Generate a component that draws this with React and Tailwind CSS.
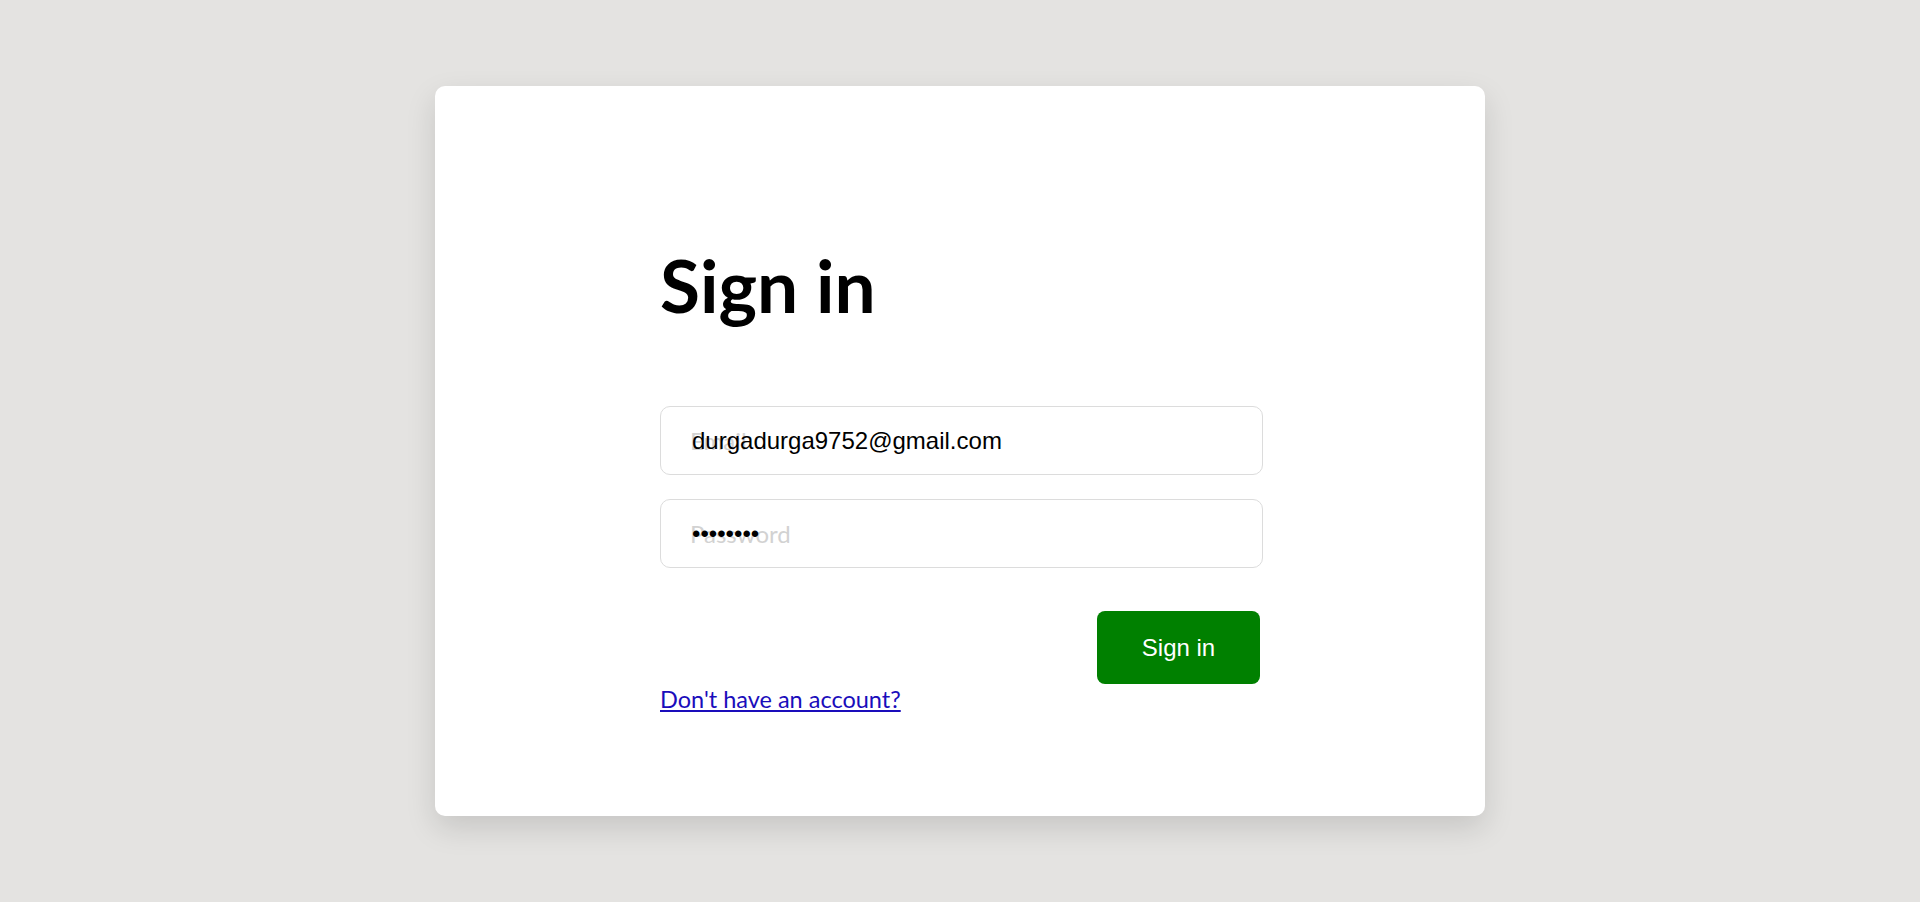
import { useState } from "react";

function Field({ type, value, placeholder, onChange }) {
  return (
    <div className="relative w-[603px] h-[69px] rounded-[10px] border border-[#dcdcdc] bg-white">
      <span className="absolute inset-y-0 left-[29px] flex items-center text-[24px] text-[#d2d2d2] font-['Lato',sans-serif] pointer-events-none">
        {placeholder}
      </span>
      <input
        type={type}
        value={value}
        onChange={(e) => onChange(e.target.value)}
        className="relative w-full h-full bg-transparent pl-[31px] pr-4 text-[24px] text-black font-['Liberation_Sans',Arial,sans-serif] outline-none rounded-[10px]"
      />
    </div>
  );
}

export default function App() {
  const [email, setEmail] = useState("durgadurga9752@gmail.com");
  const [password, setPassword] = useState("12345678");

  return (
    <div className="min-h-screen w-full bg-[#e4e3e1] flex items-center justify-center">
      <div className="w-[1050px] h-[730px] bg-white rounded-[10px] shadow-[0_12px_30px_rgba(0,0,0,0.13)] pt-[163px] flex flex-col items-center">
        <div className="w-[600px] flex flex-col">
          <h1 className="text-[73px] leading-none font-bold text-black font-['Lato',sans-serif]">
            Sign in
          </h1>

          <div className="mt-[84px] flex flex-col gap-[24px]">
            <Field type="email" value={email} placeholder="Email" onChange={setEmail} />
            <Field type="password" value={password} placeholder="Password" onChange={setPassword} />
          </div>

          <div className="mt-[43px] flex justify-end">
            <button className="w-[163px] h-[73px] rounded-[8px] bg-[#008000] text-white text-[24px] font-['Liberation_Sans',Arial,sans-serif]">
              Sign in
            </button>
          </div>

          <div className="mt-[1px]">
            <a href="#" className="text-[23.5px] leading-[1.2] text-[#1a0dbb] underline font-['Lato',sans-serif]">
              Don't have an account?
            </a>
          </div>
        </div>
      </div>
    </div>
  );
}
